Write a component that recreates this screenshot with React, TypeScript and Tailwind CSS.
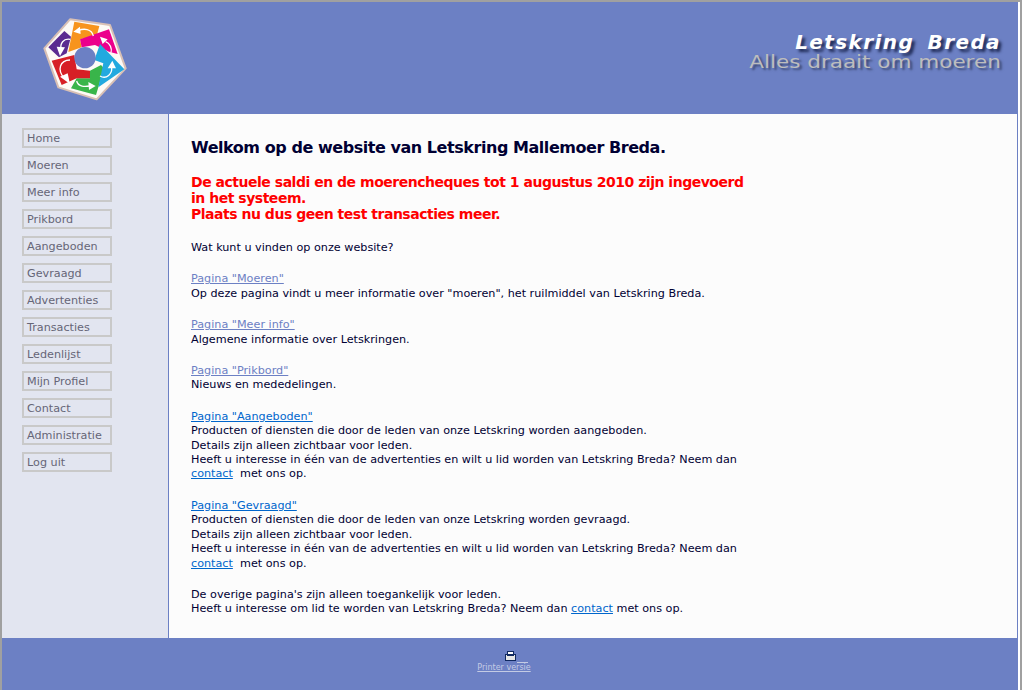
const menuItems = [
  "Home",
  "Moeren",
  "Meer info",
  "Prikbord",
  "Aangeboden",
  "Gevraagd",
  "Advertenties",
  "Transacties",
  "Ledenlijst",
  "Mijn Profiel",
  "Contact",
  "Administratie",
  "Log uit",
];

function Logo() {
  return (
    <svg width="100" height="95" viewBox="0 0 300 285">
      <polygon points="105,28 225,45 272,175 185,268 70,232 28,115" fill="#fdfaf6" stroke="#d9c0b5" strokeWidth="6" strokeLinejoin="round" />
      <polygon points="40,112 88,63 108,80 95,130 72,142" fill="#5b2a91" />
      <polygon points="118,35 193,48 185,78 135,88 140,112 100,126" fill="#f7941d" />
      <polygon points="135,88 222,58 248,132 222,125 180,105 140,112" fill="#ec008c" />
      <polygon points="165,182 198,165 207,175 183,255 108,235 125,205 165,205" fill="#39b54a" />
      <polygon points="195,102 268,178 190,232 205,160 178,150" fill="#22a9df" />
      <polygon points="50,152 118,135 125,178 165,182 165,205 125,205 80,225" fill="#d71f26" />
      <circle cx="150" cy="143" r="32" fill="#6c80c4" />
      <g fill="none" stroke="#fff" strokeWidth="4">
        <path d="M105 88C85 85 75 100 78 118" />
        <path d="M175 78C170 55 145 55 130 62" />
        <path d="M212 95C225 100 232 115 228 128" />
        <path d="M195 198C215 210 232 190 230 172" />
        <path d="M125 213C130 232 150 230 165 228" />
        <path d="M105 150C75 150 65 180 88 205" />
      </g>
      <g fill="#fff">
        <polygon points="65,110 90,112 75,138" />
        <polygon points="135,50 137,72 115,65" />
        <polygon points="195,80 218,88 203,102" />
        <polygon points="218,175 243,175 232,152" />
        <polygon points="160,216 162,240 182,228" />
        <polygon points="75,200 98,190 105,222" />
      </g>
    </svg>
  );
}

function Para({ title, active, children }: { title: string; active?: boolean; children: React.ReactNode }) {
  return (
    <p className="mb-[17px]">
      <a className={`underline ${active ? "text-[#0066cc]" : "text-[#6c80c4]"}`}>{title}</a>
      <br />
      {children}
    </p>
  );
}

export default function App() {
  return (
    <div className="h-[690px] w-[1022px] overflow-hidden border-2 border-b-0 border-[#a0a0a0] bg-white font-['DejaVu_Sans',Verdana,sans-serif] text-[11.2px] leading-[14.4px] text-[#000033]">
      <div className="flex h-full w-[1016px] flex-col">
        <header className="flex h-[112px] shrink-0 justify-between bg-[#6c80c4] pl-[33px] pr-[17px] pt-[8px]">
          <Logo />
          <div className="mt-[20px] flex flex-col items-end">
            <div className="text-[20px] font-bold italic leading-[24px] tracking-[1.4px] text-white [text-shadow:3px_3px_3px_#1f2a55] [word-spacing:5px]">
              Letskring Breda
            </div>
            <div className="-mt-[2px] origin-right scale-x-[1.265] text-[17px] leading-[20px] text-[#bdbdbd] [text-shadow:2px_2px_2px_#3a4670]">
              Alles draait om moeren
            </div>
          </div>
        </header>
        <div className="flex min-h-0 flex-1">
          <nav className="flex w-[167px] shrink-0 flex-col gap-[7px] border-r border-[#6c80c4] bg-[#e2e5f0] pl-5 pt-[14px]">
            {menuItems.map((item) => (
              <div key={item} className="h-5 w-[90px] border-2 border-[#c9c9c9] pl-[3px] leading-[18px] text-[#666677]">
                {item}
              </div>
            ))}
          </nav>
          <main className="flex-1 border-r border-[#6c80c4] bg-[#fcfcfc] pl-[22px] pt-[24px]">
            <h1 className="mb-4 text-[16px] font-bold leading-[20px] tracking-[-0.45px] text-[#000033]">
              Welkom op de website van Letskring Mallemoer Breda.
            </h1>
            <h2 className="mb-[19px] text-[14px] font-bold leading-4 tracking-[-0.48px] text-[#ff0000]">
              De actuele saldi en de moerencheques tot 1 augustus 2010 zijn ingevoerd
              <br />
              in het systeem.
              <br />
              Plaats nu dus geen test transacties meer.
            </h2>
            <p className="mb-[17px]">Wat kunt u vinden op onze website?</p>
            <Para title={'Pagina "Moeren"'}>Op deze pagina vindt u meer informatie over "moeren", het ruilmiddel van Letskring Breda.</Para>
            <Para title={'Pagina "Meer info"'}>Algemene informatie over Letskringen.</Para>
            <Para title={'Pagina "Prikbord"'}>Nieuws en mededelingen.</Para>
            <Para active title={'Pagina "Aangeboden"'}>
              Producten of diensten die door de leden van onze Letskring worden aangeboden.
              <br />
              Details zijn alleen zichtbaar voor leden.
              <br />
              Heeft u interesse in één van de advertenties en wilt u lid worden van Letskring Breda? Neem dan
              <br />
              <a className="text-[#0066cc] underline">contact</a>&nbsp; met ons op.
            </Para>
            <Para active title={'Pagina "Gevraagd"'}>
              Producten of diensten die door de leden van onze Letskring worden gevraagd.
              <br />
              Details zijn alleen zichtbaar voor leden.
              <br />
              Heeft u interesse in één van de advertenties en wilt u lid worden van Letskring Breda? Neem dan
              <br />
              <a className="text-[#0066cc] underline">contact</a>&nbsp; met ons op.
            </Para>
            <p>
              De overige pagina's zijn alleen toegankelijk voor leden.
              <br />
              Heeft u interesse om lid te worden van Letskring Breda? Neem dan <a className="text-[#0066cc] underline">contact</a> met ons op.
            </p>
          </main>
        </div>
        <footer className="flex h-[52px] shrink-0 flex-col items-center bg-[#6c80c4] pt-[13px]">
          <div className="ml-[13px] flex h-[12px] items-start">
            <svg width="11" height="10" viewBox="0 0 11 10">
              <rect x="0.5" y="3.5" width="10" height="6" fill="#e6e6e6" stroke="#10285f" />
              <rect x="2.5" y="0.5" width="6" height="3" fill="#fff" stroke="#10285f" />
              <rect x="2" y="4" width="7" height="1" fill="#10285f" />
            </svg>
            <span className="ml-px mt-[11px] h-px w-[11px] bg-[#c4cbe4]" />
          </div>
          <a className="mr-[12px] -mt-px text-[8px] leading-[11px] text-[#c4cbe4] underline">Printer versie</a>
        </footer>
      </div>
    </div>
  );
}
